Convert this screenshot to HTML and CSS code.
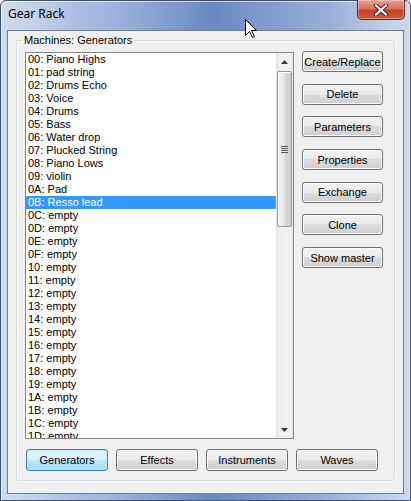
FILE: index.html
```html
<!DOCTYPE html>
<html>
<head>
<meta charset="utf-8">
<link rel="stylesheet" href="styles.css">
</head>
<body>
<div class="window">
  <div class="titlebar">
    <span class="title">Gear Rack</span>
    <div class="close">
      <svg width="16" height="12" viewBox="0 0 16 12"><path d="M3 1.5 L13 10.5 M13 1.5 L3 10.5" stroke="#3b2a28" stroke-width="4.2" stroke-linecap="round"/><path d="M3 1.5 L13 10.5 M13 1.5 L3 10.5" stroke="#ffffff" stroke-width="2.2" stroke-linecap="round"/></svg>
    </div>
  </div>
  <div class="client">
    <fieldset class="group">
      <legend class="group-label">Machines: Generators</legend>
      <div class="top-row">
        <div class="listbox">
          <div class="items">
            <div class="row">00: Piano Highs</div>
            <div class="row">01: pad string</div>
            <div class="row">02: Drums Echo</div>
            <div class="row">03: Voice</div>
            <div class="row">04: Drums</div>
            <div class="row">05: Bass</div>
            <div class="row">06: Water drop</div>
            <div class="row">07: Plucked String</div>
            <div class="row">08: Piano Lows</div>
            <div class="row">09: violin</div>
            <div class="row">0A: Pad</div>
            <div class="row selected">0B: Resso lead</div>
            <div class="row">0C: empty</div>
            <div class="row">0D: empty</div>
            <div class="row">0E: empty</div>
            <div class="row">0F: empty</div>
            <div class="row">10: empty</div>
            <div class="row">11: empty</div>
            <div class="row">12: empty</div>
            <div class="row">13: empty</div>
            <div class="row">14: empty</div>
            <div class="row">15: empty</div>
            <div class="row">16: empty</div>
            <div class="row">17: empty</div>
            <div class="row">18: empty</div>
            <div class="row">19: empty</div>
            <div class="row">1A: empty</div>
            <div class="row">1B: empty</div>
            <div class="row">1C: empty</div>
            <div class="row">1D: empty</div>
          </div>
          <div class="vscroll">
            <div class="sb-btn"><svg width="7" height="4" viewBox="0 0 7 4"><path d="M3.5 0 L7 4 L0 4 Z" fill="#3a3a3a"/></svg></div>
            <div class="sb-track">
              <div class="sb-thumb"><span class="grip"></span></div>
            </div>
            <div class="sb-btn"><svg width="7" height="4" viewBox="0 0 7 4"><path d="M0 0 L7 0 L3.5 4 Z" fill="#3a3a3a"/></svg></div>
          </div>
        </div>
        <div class="actions">
          <button class="btn">Create/Replace</button>
          <button class="btn">Delete</button>
          <button class="btn">Parameters</button>
          <button class="btn">Properties</button>
          <button class="btn">Exchange</button>
          <button class="btn">Clone</button>
          <button class="btn">Show master</button>
        </div>
      </div>
      <div class="tabs">
        <button class="btn tab active">Generators</button>
        <button class="btn tab">Effects</button>
        <button class="btn tab">Instruments</button>
        <button class="btn tab">Waves</button>
      </div>
    </fieldset>
  </div>
  <svg class="cursor" width="13" height="20" viewBox="0 0 13 20"><path d="M0.5 0.5 L0.5 16.5 L4.5 12.5 L7.5 18.5 L9.5 17.5 L6.5 11.5 L11.5 11.5 Z" fill="#ffffff" stroke="#000000" stroke-width="1" stroke-linejoin="miter"/></svg>
</div>
</body>
</html>
```
FILE: styles.css
```css
* { box-sizing: border-box; }
html, body { margin: 0; padding: 0; background: #ffffff; }
body { width: 411px; height: 501px; overflow: hidden; }

.window {
  position: relative;
  width: 411px;
  height: 501px;
  border: 1px solid #3d5173;
  border-radius: 6px 6px 0 0;
  padding: 0 6px 6px 6px;
  display: flex;
  flex-direction: column;
  background:
    linear-gradient(90deg, rgba(255,255,255,0.35), rgba(255,255,255,0) 20%, rgba(255,255,255,0) 80%, rgba(255,255,255,0.3)),
    linear-gradient(90deg, #b9cae6 0%, #a3b8de 25%, #6a88c2 52%, #8aa2d2 70%, #b7c8e6 100%);
  box-shadow: inset 1px 1px 0 rgba(255,255,255,0.6), inset -1px 0 0 rgba(255,255,255,0.4);
  font-family: "Liberation Sans", Arial, sans-serif;
}

.titlebar {
  height: 29px;
  display: flex;
  justify-content: space-between;
  align-items: flex-start;
}
.title {
  font-family: "Noto Sans", "Open Sans", sans-serif;
  font-size: 12px;
  line-height: 16px;
  padding: 5px 0 0 1px;
  color: #000;
}
.close {
  width: 48px;
  height: 20px;
  margin-top: -1px;
  margin-right: -1px;
  border: 1px solid #5a2a24;
  border-top: none;
  border-radius: 0 0 5px 5px;
  background: linear-gradient(#e8a394 0%, #d7735f 45%, #c4402a 55%, #cf5a3c 100%);
  box-shadow: inset 0 0 0 1px rgba(255,255,255,0.35);
  display: flex;
  align-items: center;
  justify-content: center;
}

.client {
  flex: 1;
  background: #f0f0f0;
  border: 1px solid #6b7ea4;
  display: flex;
  flex-direction: column;
}

.group {
  margin: 3px 8px 0 8px;
  padding: 5px 9px 9px 8px;
  border: 1px solid #d5dfe5;
  border-radius: 3px;
  box-shadow: inset 1px 1px 0 #ffffff, 1px 1px 0 #ffffff;
  min-width: 0;
}
.group-label {
  font-size: 11px;
  line-height: 13px;
  padding: 0 2px;
  margin-left: -3px;
  color: #000;
}

.top-row {
  display: flex;
  gap: 8px;
  align-items: flex-start;
}

.listbox {
  width: 269px;
  height: 387px;
  border: 1px solid #828790;
  background: #ffffff;
  display: flex;
}
.items {
  flex: 1;
  overflow: hidden;
  font-size: 11px;
  line-height: 13px;
}
.row {
  height: 13px;
  padding-left: 2px;
  white-space: nowrap;
  color: #000;
}
.row.selected {
  background: #3399ff;
  color: #ffffff;
  border-right: 1px dotted #e39a3c;
}

.vscroll {
  width: 17px;
  display: flex;
  flex-direction: column;
  background: linear-gradient(90deg, #e3e3e3, #f0f0f0 20%, #f2f2f2 80%, #e6e6e6);
}
.sb-btn {
  height: 17px;
  display: flex;
  align-items: center;
  justify-content: center;
}
.sb-track { flex: 1; }
.sb-thumb {
  margin: 1px 0 0 1px;
  width: 15px;
  height: 156px;
  border: 1px solid #9a9a9a;
  border-radius: 2px;
  background: linear-gradient(90deg, #f4f4f4 0%, #e8e8e8 45%, #d8d8d8 55%, #cfcfcf 100%);
  box-shadow: inset 1px 1px 0 #fbfbfb;
  display: flex;
  align-items: center;
  justify-content: center;
}
.grip {
  width: 7px;
  height: 7px;
  background: repeating-linear-gradient(#555 0 1px, #e8e8e8 1px 2px);
}

.actions {
  display: flex;
  flex-direction: column;
  gap: 11.7px;
  margin-top: -1px;
}

.btn {
  font-family: "Liberation Sans", Arial, sans-serif;
  font-size: 11px;
  color: #000;
  width: 81px;
  height: 21px;
  margin: 0;
  padding: 0;
  border: 1px solid #707070;
  border-radius: 3px;
  background: linear-gradient(#f2f2f2 0%, #ebebeb 50%, #dddddd 50%, #cfcfcf 100%);
  box-shadow: inset 0 0 0 1px #fbfbfb;
}

.tabs {
  display: flex;
  gap: 8px;
  margin: 10px 0 0 1px;
}
.tab {
  width: 82px;
  height: 22px;
}
.tab.active {
  border-color: #3c7fb1;
  background: linear-gradient(#eaf6fd 0%, #d9f0fc 50%, #bee6fd 50%, #a7d9f5 100%);
  box-shadow: inset 0 0 0 1px #c8eafc;
}

.cursor {
  position: absolute;
  left: 244px;
  top: 18px;
}
```
